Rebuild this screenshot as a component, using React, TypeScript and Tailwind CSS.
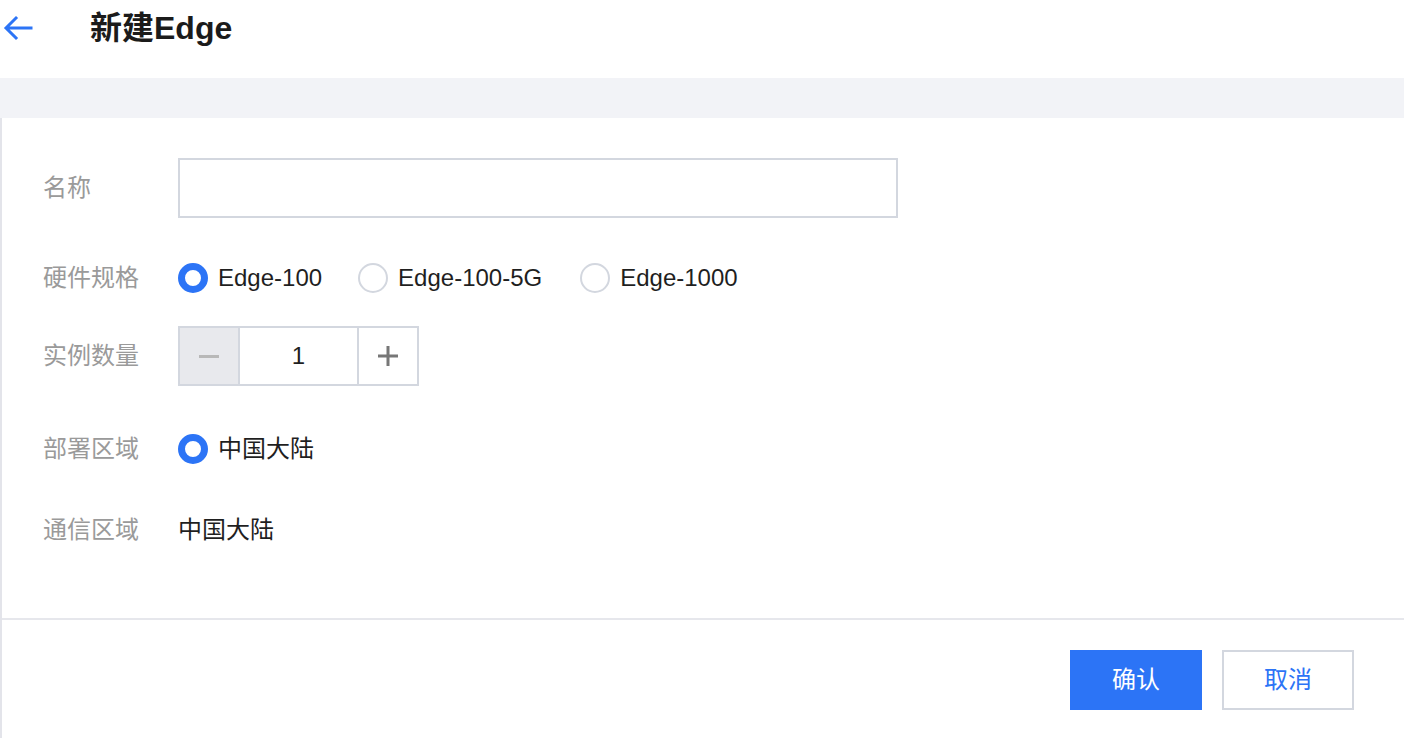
import React from "react";

const font = { fontFamily: '"Liberation Sans", "Noto Sans CJK SC", sans-serif' };

function Radio({ checked, label }: { checked?: boolean; label: string }) {
  return (
    <div className="flex items-center">
      {checked ? (
        <span className="w-[30px] h-[30px] rounded-full border-[7px] border-[#2c74f6] bg-white box-border" />
      ) : (
        <span className="w-[30px] h-[30px] rounded-full border-2 border-[#d3d7df] bg-white box-border" />
      )}
      <span className="ml-[10px] text-[24px] text-[#1f1f1f] leading-none">{label}</span>
    </div>
  );
}

function Label({ children }: { children: React.ReactNode }) {
  return <div className="w-[135px] shrink-0 text-[24px] text-[#9a9a9a] leading-none">{children}</div>;
}

export default function App() {
  return (
    <div className="w-[1404px] h-[738px] bg-white flex flex-col overflow-hidden" style={font}>
      <div className="h-[78px] shrink-0 flex items-center bg-white">
        <svg className="ml-[3px] mt-[-22px]" width="30" height="26" viewBox="0 0 30 26" fill="none">
          <path d="M28 13H4M13 3L3 13L13 23" stroke="#2c74f6" strokeWidth="3" strokeLinecap="square" />
        </svg>
        <div className="ml-[57px] mt-[-22px] text-[32px] font-bold text-[#1b1b1b] leading-none">新建Edge</div>
      </div>
      <div className="flex-1 bg-[#f2f3f7] pt-[40px] flex flex-col">
        <div className="flex-1 bg-white border-l-2 border-[#e3e4ea] flex flex-col">
          <div className="pl-[41px] pt-[40px] pb-[58px]">
            <div className="flex items-center h-[60px]">
              <Label>名称</Label>
              <div className="w-[720px] h-[60px] border-2 border-[#d3d7df] bg-white" />
            </div>
            <div className="flex items-center h-[60px] mt-[30px]">
              <Label>硬件规格</Label>
              <div className="flex items-center">
                <Radio checked label="Edge-100" />
                <div className="ml-[36px]">
                  <Radio label="Edge-100-5G" />
                </div>
                <div className="ml-[38px]">
                  <Radio label="Edge-1000" />
                </div>
              </div>
            </div>
            <div className="flex items-center h-[60px] mt-[18px]">
              <Label>实例数量</Label>
              <div className="flex h-[60px] border-2 border-[#d3d7df]">
                <div className="w-[60px] bg-[#e8e9ed] border-r-2 border-[#d3d7df] flex items-center justify-center">
                  <span className="w-[20px] h-[3px] bg-[#b8b8b8]" />
                </div>
                <div className="w-[117px] flex items-center justify-center text-[24px] text-[#1f1f1f]">1</div>
                <div className="w-[60px] border-l-2 border-[#d3d7df] flex items-center justify-center">
                  <svg width="20" height="20" viewBox="0 0 20 20">
                    <path d="M10 0V20M0 10H20" stroke="#777" strokeWidth="3" />
                  </svg>
                </div>
              </div>
            </div>
            <div className="flex items-center h-[60px] mt-[33px]">
              <Label>部署区域</Label>
              <Radio checked label="中国大陆" />
            </div>
            <div className="flex items-center h-[60px] mt-[21px]">
              <Label>通信区域</Label>
              <span className="text-[24px] text-[#1f1f1f] leading-none">中国大陆</span>
            </div>
          </div>
          <div className="h-[2px] bg-[#e6e7ec]" />
          <div className="flex justify-end gap-[20px] pt-[30px] pr-[50px]">
            <button className="w-[132px] h-[60px] bg-[#2c74f6] text-white text-[24px]">确认</button>
            <button className="w-[132px] h-[60px] border-2 border-[#d3d7df] bg-white text-[#2c74f6] text-[24px]">取消</button>
          </div>
        </div>
      </div>
    </div>
  );
}
